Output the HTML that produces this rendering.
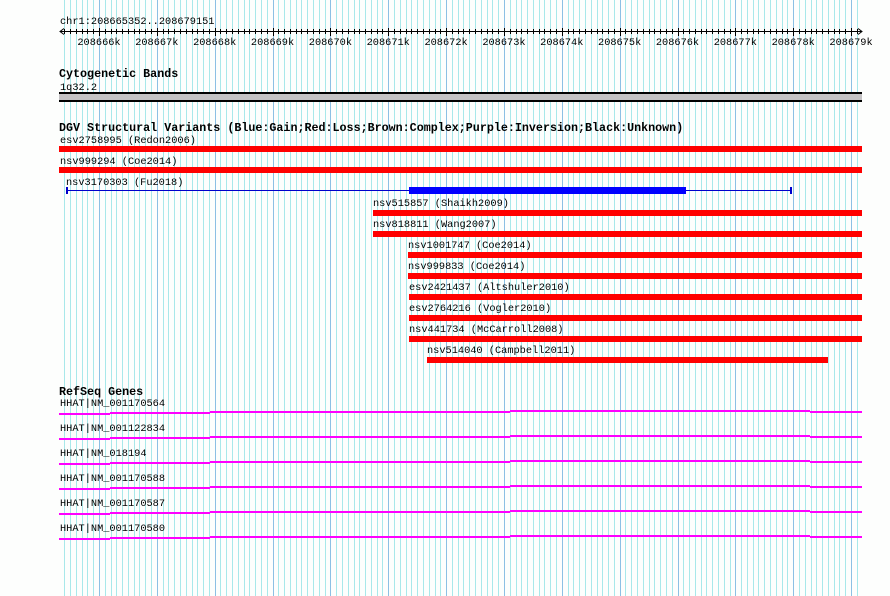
<!DOCTYPE html>
<html><head><meta charset="utf-8"><style>
html,body{margin:0;padding:0;background:#fdfefd;}
svg{display:block;}
text{font-family:"Liberation Mono","DejaVu Sans Mono",monospace;font-size:10.3px;fill:#000;}
.h{font-weight:bold;font-size:11.7px;}
</style></head><body>
<svg id="s" width="890" height="596" xmlns="http://www.w3.org/2000/svg" shape-rendering="crispEdges">
<rect width="890" height="596" fill="#fdfefd"/>
<g id="grid"></g>
<g id="ruler" stroke="#000" stroke-width="1"></g>
<text x="60" y="24">chr1:208665352..208679151</text>
<g id="lbl"></g>
<text class="h" x="59" y="77">Cytogenetic Bands</text>
<text x="60" y="90">1q32.2</text>
<rect x="59" y="92" width="803" height="2" fill="#000"/>
<rect x="59" y="94" width="803" height="6" fill="#c4c2c4"/>
<rect x="59" y="100" width="803" height="2" fill="#000"/>
<text class="h" x="59" y="131">DGV Structural Variants (Blue:Gain;Red:Loss;Brown:Complex;Purple:Inversion;Black:Unknown)</text>
<text x="60" y="143">esv2758995 (Redon2006)</text>
<rect x="59" y="146" width="803" height="6" fill="#f00"/>
<text x="60" y="164">nsv999294 (Coe2014)</text>
<rect x="59" y="167" width="803" height="6" fill="#f00"/>
<text x="66" y="185">nsv3170303 (Fu2018)</text>
<rect x="66" y="190" width="725" height="1" fill="#00c"/>
<rect x="66" y="187" width="2" height="7" fill="#00c"/>
<rect x="790" y="187" width="2" height="7" fill="#00c"/>
<rect x="409" y="187" width="277" height="7" fill="#00f"/>
<text x="373" y="206">nsv515857 (Shaikh2009)</text>
<rect x="373" y="210" width="489" height="6" fill="#f00"/>
<text x="373" y="227">nsv818811 (Wang2007)</text>
<rect x="373" y="231" width="489" height="6" fill="#f00"/>
<text x="408" y="248">nsv1001747 (Coe2014)</text>
<rect x="408" y="252" width="454" height="6" fill="#f00"/>
<text x="408" y="269">nsv999833 (Coe2014)</text>
<rect x="408" y="273" width="454" height="6" fill="#f00"/>
<text x="409" y="290">esv2421437 (Altshuler2010)</text>
<rect x="409" y="294" width="453" height="6" fill="#f00"/>
<text x="409" y="311">esv2764216 (Vogler2010)</text>
<rect x="409" y="315" width="453" height="6" fill="#f00"/>
<text x="409" y="332">nsv441734 (McCarroll2008)</text>
<rect x="409" y="336" width="453" height="6" fill="#f00"/>
<text x="427" y="353">nsv514040 (Campbell2011)</text>
<rect x="427" y="357" width="401" height="6" fill="#f00"/>
<text class="h" x="59" y="395">RefSeq Genes</text>
<g id="genes"></g>
</svg>
<script>
var NS="http://www.w3.org/2000/svg";
function el(p,t,a,txt){var e=document.createElementNS(NS,t);for(var k in a)e.setAttribute(k,a[k]);if(txt)e.textContent=txt;document.getElementById(p).appendChild(e);}
var step=57.85/10, x0=99;
for(var i=-6;i<=131;i++){
  var x=Math.round(x0+i*step); if(x<59||x>858)continue;
  var maj=(i%10==0);
  el("grid","rect",{x:x,y:0,width:1,height:596,fill:maj?"#8cc0e4":"#a8e8ea"});
}
el("ruler","line",{x1:60,y1:31.5,x2:862,y2:31.5});
el("ruler","path",{d:"M64 28.5 L60 31.5 L64 34.5 M858 28.5 L862 31.5 L858 34.5",fill:"none","shape-rendering":"auto"});
for(var i=-6;i<=131;i++){
  var x=Math.round(x0+i*step)+0.5; if(x<62||x>860)continue;
  var maj=(i%10==0);
  el("ruler","line",{x1:x,y1:maj?28:29,x2:x,y2:maj?36:34});
}
for(var k=0;k<14;k++){
  var x=x0+k*57.85;
  el("lbl","text",{x:x,y:45,"text-anchor":"middle"},(208666+k)+"k");
}
var names=["HHAT|NM_001170564","HHAT|NM_001122834","HHAT|NM_018194","HHAT|NM_001170588","HHAT|NM_001170587","HHAT|NM_001170580"];
var offs=[0,-1,-2,-2,-2,-3,-3,-3,-2];
var xs=[59,110,210,310,410,510,610,710,810,862];
for(var g=0;g<6;g++){
  var ty=406+g*25, ly=414+g*25;
  el("genes","text",{x:60,y:ty},names[g]);
  for(var s=0;s<9;s++){
    el("genes","rect",{x:xs[s],y:ly+offs[s]-1,width:xs[s+1]-xs[s],height:2,fill:"#f0f"});
  }
}
</script>
</body></html>
